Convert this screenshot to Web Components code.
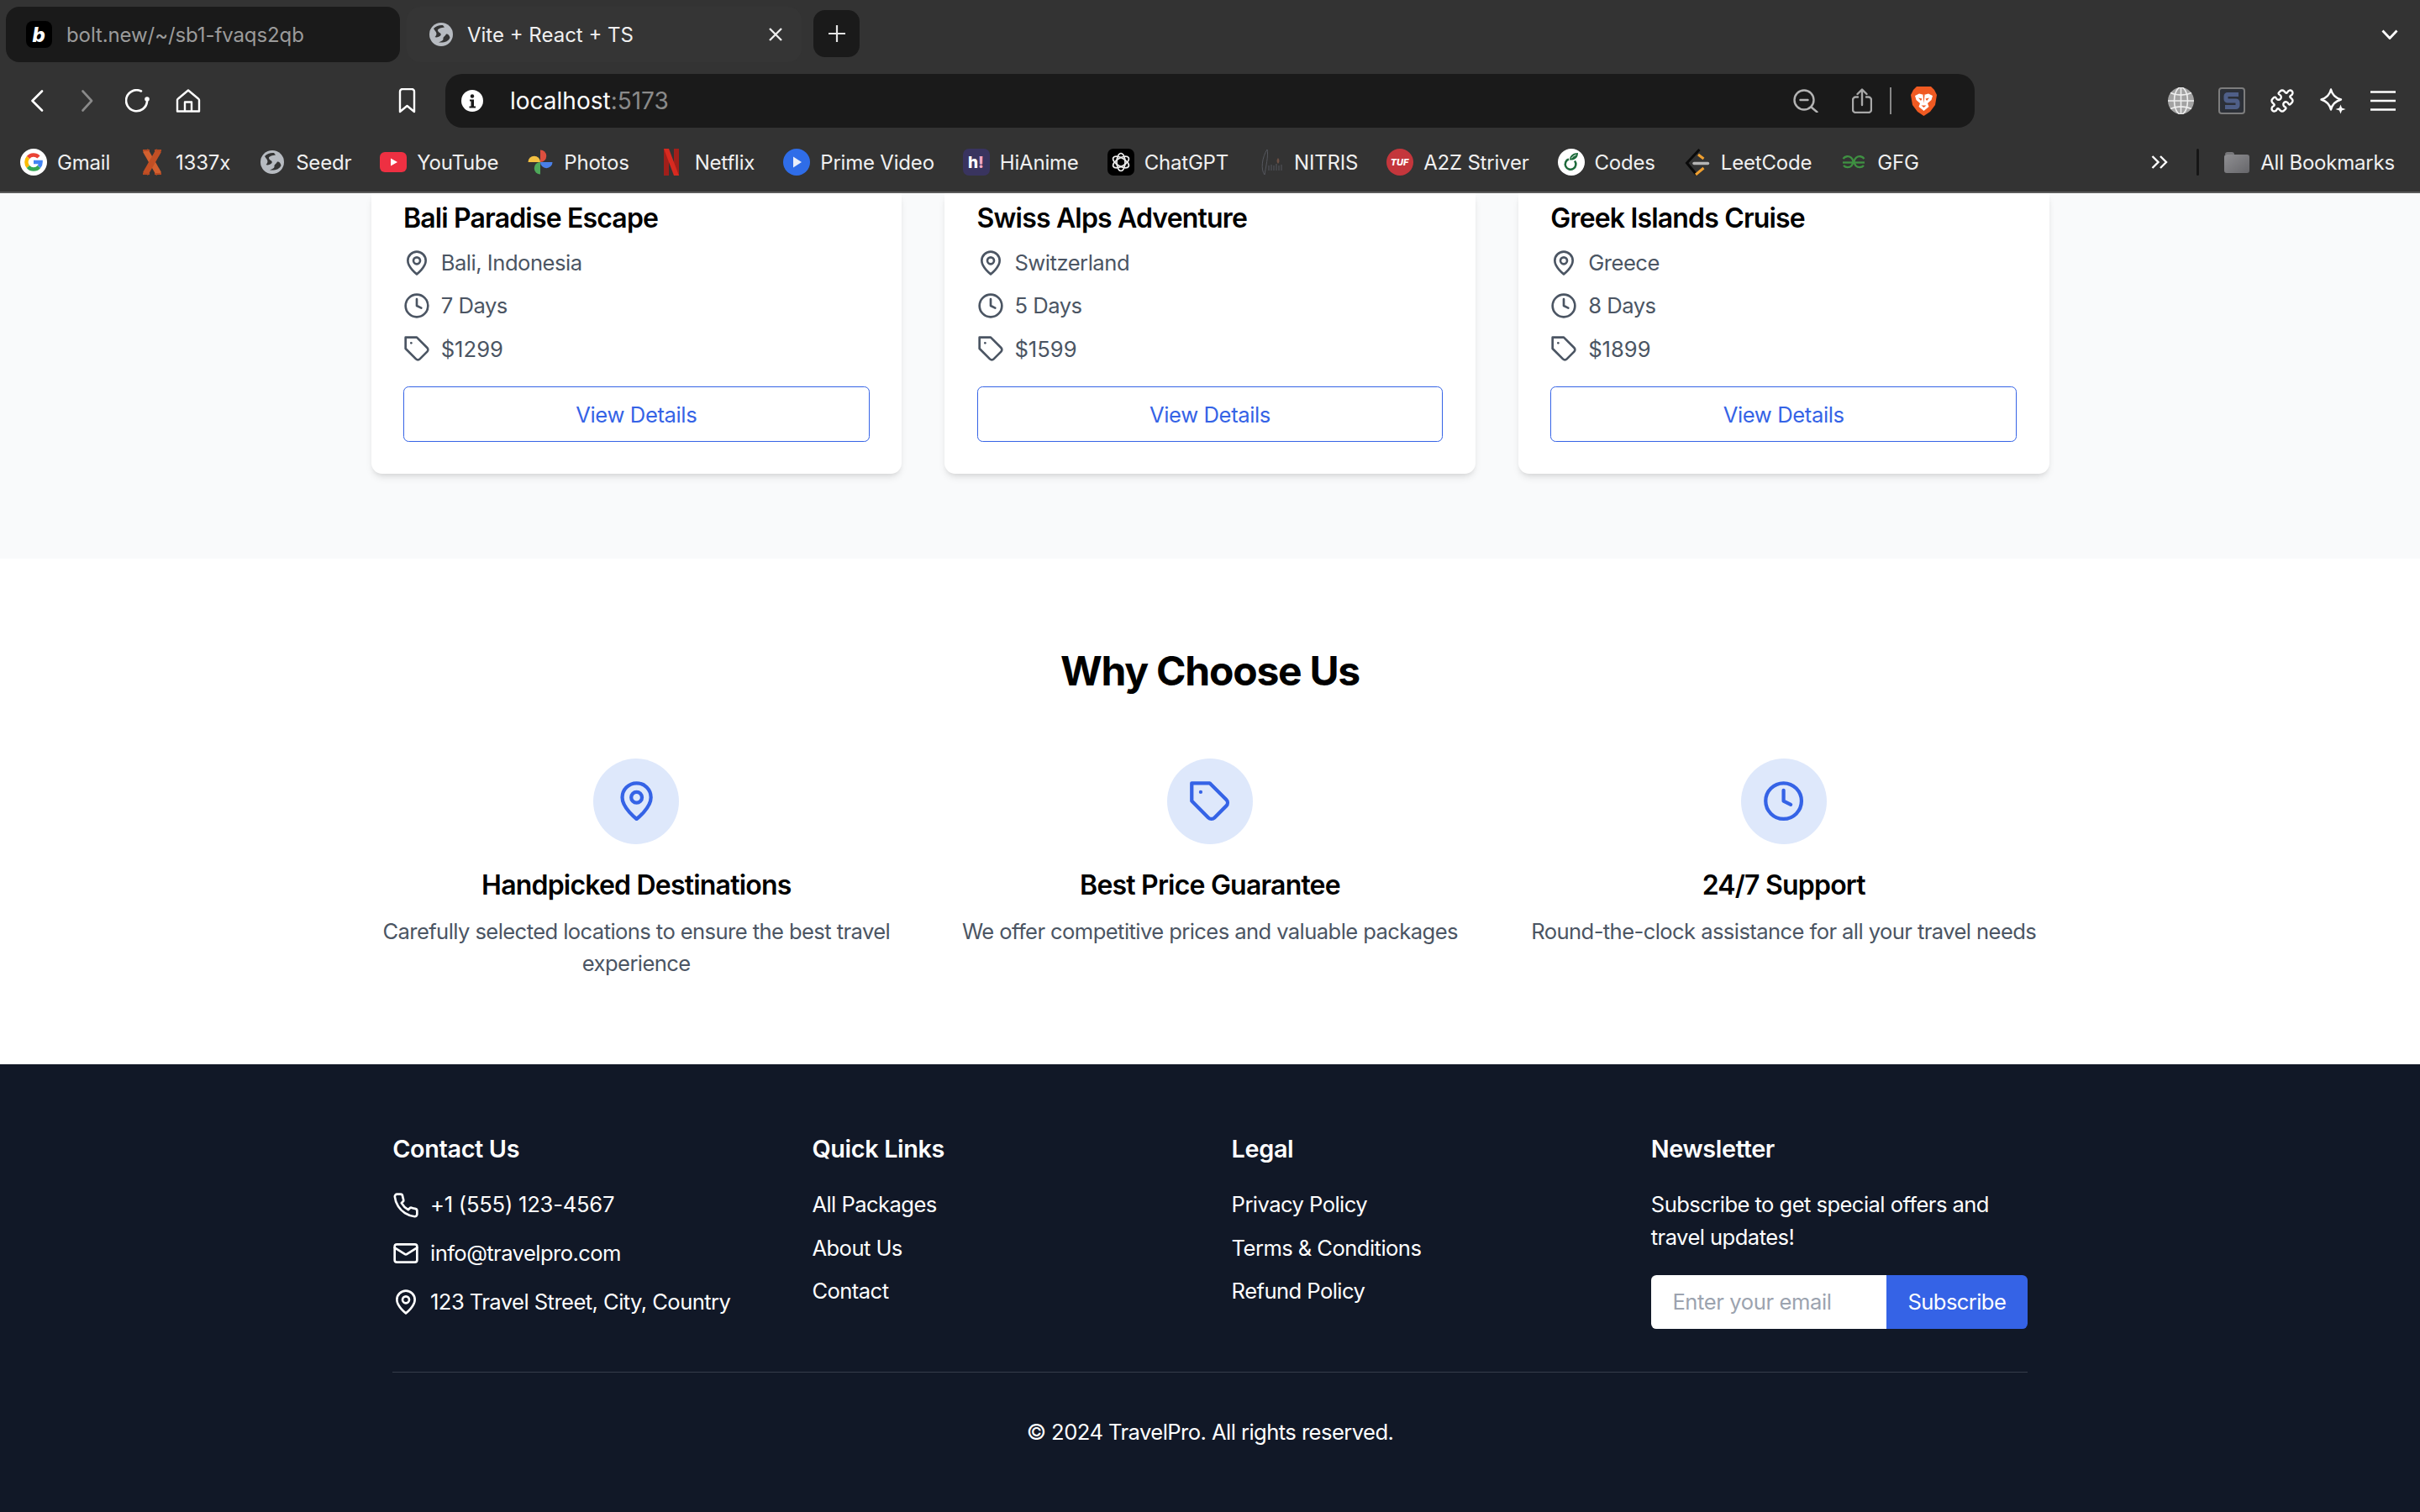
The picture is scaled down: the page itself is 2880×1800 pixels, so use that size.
<!doctype html>
<html lang="en">
  <head>
    <meta charset="UTF-8" />
    <title>Vite + React + TS</title>
    <style>
      html, body { margin: 0; height: 100%; }
      body { width: 2880px; height: 1800px; overflow: hidden; display: flex; flex-direction: column; font-family: Inter, "Liberation Sans", sans-serif; background: #111827; }
    </style>
  </head>
  <body>
    <browser-chrome></browser-chrome>

    <packages-section>
      <tour-card name="Bali Paradise Escape" place="Bali, Indonesia" days="7 Days" price="$1299"></tour-card>
      <tour-card name="Swiss Alps Adventure" place="Switzerland" days="5 Days" price="$1599"></tour-card>
      <tour-card name="Greek Islands Cruise" place="Greece" days="8 Days" price="$1899"></tour-card>
    </packages-section>

    <why-section>
      <why-item icon="pin" heading="Handpicked Destinations">Carefully selected locations to ensure the best travel experience</why-item>
      <why-item icon="tag" heading="Best Price Guarantee">We offer competitive prices and valuable packages</why-item>
      <why-item icon="clock" heading="24/7 Support">Round-the-clock assistance for all your travel needs</why-item>
    </why-section>

    <site-footer></site-footer>

    <script>
      // Lucide style icons used by the page itself
      const LUCIDE = {
        pin: '<path d="M20 10c0 6-8 12-8 12s-8-6-8-12a8 8 0 0 1 16 0Z"/><circle cx="12" cy="10" r="3"/>',
        clock: '<circle cx="12" cy="12" r="10"/><polyline points="12 6 12 12 16 14"/>',
        tag: '<path d="M12 2H2v10l9.29 9.29c.94.94 2.48.94 3.42 0l6.58-6.58c.94-.94.94-2.48 0-3.42L12 2Z"/><path d="M7 7h.01"/>',
        phone: '<path d="M22 16.92v3a2 2 0 0 1-2.18 2 19.79 19.79 0 0 1-8.63-3.07 19.5 19.5 0 0 1-6-6 19.79 19.79 0 0 1-3.07-8.67A2 2 0 0 1 4.11 2h3a2 2 0 0 1 2 1.72 12.84 12.84 0 0 0 .7 2.81 2 2 0 0 1-.45 2.11L8.09 9.91a16 16 0 0 0 6 6l1.27-1.27a2 2 0 0 1 2.11-.45 12.84 12.84 0 0 0 2.81.7A2 2 0 0 1 22 16.92z"/>',
        mail: '<rect width="20" height="16" x="2" y="4" rx="2"/><path d="m22 7-8.97 5.7a1.94 1.94 0 0 1-2.06 0L2 7"/>'
      }

      class LineIcon extends HTMLElement {
        connectedCallback() {
          const shadow = this.attachShadow({ mode: 'open' })
          const size = this.getAttribute('size') || 32
          shadow.innerHTML = `
            <style>:host { display: block; flex: none; width: ${size}px; height: ${size}px; } svg { display: block; }</style>
            <svg width="${size}" height="${size}" viewBox="0 0 24 24" fill="none" stroke="currentColor" stroke-width="2" stroke-linecap="round" stroke-linejoin="round">${LUCIDE[this.getAttribute('name')]}</svg>`
        }
      }
      customElements.define('line-icon', LineIcon)

      // Browser toolbar and bookmark glyphs: [width, height, viewBox, markup]
      const W = 'stroke="#fff" fill="none" stroke-linecap="round" stroke-linejoin="round"'
      const CHROME = {
        back: [16, 26, '0 0 16 26', `<path d="M14 1.5 2.5 13 14 24.5" ${W} stroke-width="2.6"/>`],
        forward: [14, 26, '0 0 14 26', `<path d="M1.5 1.5 12 13 1.5 24.5" ${W} stroke-width="2.6" style="stroke:#8a8a8a"/>`],
        reload: [30, 28, '0 0 30 28', `<path d="M26 15A12.5 12.5 0 1 1 19 2.5" ${W} stroke-width="2.6"/><circle cx="26" cy="12" r="2.8" fill="#fff"/>`],
        home: [30, 28, '0 0 30 28', `<path d="M15 1.5 3 11.5a2 2 0 0 0-1 2V26.5H28V13.5a2 2 0 0 0-1-2Z" ${W} stroke-width="2.4"/><path d="M11 26V15.5H19V26" ${W} stroke-width="2.4"/>`],
        bookmark: [21, 30, '0 0 21 30', `<path d="M2 4a3 3 0 0 1 3-3H16a3 3 0 0 1 3 3V28L10.5 21 2 28Z" ${W} stroke-width="2.4"/>`],
        info: [26, 26, '0 0 26 26', '<circle cx="13" cy="13" r="13" fill="#fff"/><circle cx="13" cy="7.5" r="2.2" fill="#1a1a1a"/><path d="M10 11.5h5v8h2v2H9.5v-2h2v-6H10Z" fill="#1a1a1a"/>'],
        zoomout: [30, 28, '0 0 30 28', '<g stroke="#b4b4b4" fill="none" stroke-width="2.4" stroke-linecap="round"><circle cx="13" cy="13" r="11.5"/><path d="M8.5 13h9M21.5 21.5 28.5 27.5"/></g>'],
        share: [24, 30, '0 0 24 30', '<g stroke="#a8a8a8" fill="none" stroke-width="2.4" stroke-linecap="round" stroke-linejoin="round"><path d="M7 10.5H4.5a3.5 3.5 0 0 0-3.5 3.5V25.5a3.5 3.5 0 0 0 3.5 3.5H19.5a3.5 3.5 0 0 0 3.5-3.5V14a3.5 3.5 0 0 0-3.5-3.5H17"/><path d="M12 20V2M6.5 7 12 1.5 17.5 7"/></g>'],
        brave: [31, 36, '0 0 31 36', '<path d="M7 1H24L28 5 31 11 29 23 23 31 15.5 36 8 31 2 23 0 11 3 5Z" fill="#f05a22"/><path d="M5 12 10 9.5 15.5 11 21 9.5 26 12 24.5 17 20 21 21.5 25 15.5 30 9.5 25 11 21 6.5 17Z" fill="#fff"/><path d="M9 14.5 13.5 15.5 12 18ZM22 14.5 17.5 15.5 19 18ZM14.5 11 15.5 21 16.5 11Z" fill="#f05a22"/><path d="M12.5 23.5h6l-3 2.5Z" fill="#f05a22"/>'],
        globe: [31, 32, '0 0 31 32', '<ellipse cx="15.5" cy="16" rx="15.5" ry="16" fill="#a3a3a3"/><g stroke="#eee" stroke-width="1.6" fill="none"><ellipse cx="15.5" cy="16" rx="8" ry="16"/><path d="M15.5 0V32M0 16H31M3 6.5C10 10 21 10 28 6.5M3 25.5C10 22 21 22 28 25.5"/></g>'],
        sbox: [32, 32, '0 0 32 32', '<rect x="1" y="1" width="30" height="30" rx="3" fill="#2c3038" stroke="#7d7d7d" stroke-width="2"/><path d="M24 8.5H11a2 2 0 0 0-2 2v3.5a2 2 0 0 0 2 2H21a2 2 0 0 1 2 2V21.5a2 2 0 0 1-2 2H8" fill="none" stroke="#4f5f88" stroke-width="5"/>'],
        puzzle: [30, 30, '0 0 24 24', `<path d="M19.439 7.85c-.049.322.059.648.289.878l1.568 1.568c.47.47.706 1.087.706 1.704s-.235 1.233-.706 1.704l-1.611 1.611a.98.98 0 0 1-.837.276c-.47-.07-.802-.48-.968-.925a2.501 2.501 0 1 0-3.214 3.214c.446.166.855.497.925.968a.979.979 0 0 1-.276.837l-1.61 1.61a2.404 2.404 0 0 1-1.705.707 2.402 2.402 0 0 1-1.704-.706l-1.568-1.568a1.026 1.026 0 0 0-.877-.29c-.493.074-.84.504-1.02.968a2.5 2.5 0 1 1-3.237-3.237c.464-.18.894-.527.967-1.02a1.026 1.026 0 0 0-.289-.877l-1.568-1.568A2.402 2.402 0 0 1 1.998 12c0-.617.236-1.234.706-1.704L4.23 8.77c.24-.24.581-.353.917-.303.515.077.877.528 1.073 1.01a2.5 2.5 0 1 0 3.259-3.259c-.482-.196-.933-.558-1.01-1.073-.05-.336.062-.676.303-.917l1.525-1.525A2.402 2.402 0 0 1 12 1.998c.617 0 1.234.236 1.704.706l1.568 1.568c.23.23.556.338.877.29.493-.074.84-.504 1.02-.968a2.5 2.5 0 1 1 3.237 3.237c-.464.18-.894.527-.967 1.02Z" ${W} stroke-width="1.9"/>`],
        sparkle: [31, 31, '0 0 31 31', `<path d="M13 1.5C14.5 8 18 11.5 25 13.5 18 15.5 14.5 19 13 25.5 11.5 19 8 15.5 1.5 13.5 8 11.5 11.5 8 13 1.5Z" ${W} stroke-width="2.4"/><path d="M24.5 19.5 26 23.5 30.5 25 26 26.5 24.5 30.5 23 26.5 18.5 25 23 23.5Z" fill="#fff"/>`],
        menu: [30, 24, '0 0 30 24', '<path d="M0 1.5H30M0 12H30M0 22.5H30" stroke="#fff" stroke-width="2.6"/>'],
        plus: [20, 20, '0 0 20 20', '<path d="M10 0V20M0 10H20" stroke="#e4e4e4" stroke-width="2.2"/>'],
        close: [18, 16, '0 0 18 16', '<path d="M2 1 16 15M16 1 2 15" stroke="#eee" stroke-width="2.4"/>'],
        chevdown: [20, 12, '0 0 20 12', '<path d="M1.5 1.5 10 10.5 18.5 1.5" stroke="#fff" fill="none" stroke-width="2.8"/>'],
        chevrons: [20, 16, '0 0 20 16', '<path d="M1.5 1 8.5 8 1.5 15M11 1 18 8 11 15" stroke="#fff" fill="none" stroke-width="2.4"/>'],
        favb: [31, 32, '0 0 31 32', '<rect width="31" height="32" rx="8" fill="#000"/><text x="15" y="25" text-anchor="middle" font-family="Inter" font-size="24" font-weight="800" font-style="italic" fill="#fff">b</text>'],
        world: [32, 32, '0 0 32 32', '<circle cx="16" cy="16" r="14" fill="#b7bbc1"/><path d="M7 9C10 6 14 4.5 18 5L20 7.5C16 8 12 9 12 11 12 14 17 14 15.5 17 14 19 10 20 8.5 19 11 17 11 14 9 12Z" fill="#333"/><path d="M22 15.5C24 15 26 17 26.5 20 24.5 24 21 26 13 25.5 16 24 19 23 18.5 21 18 19 21 18 22 15.5Z" fill="#333"/>'],
        google: [32, 32, '0 0 32 32', '<circle cx="16" cy="16" r="16" fill="#fff"/><g fill="none" stroke-width="4.6"><path d="M9.5 10.5A8.5 8.5 0 0 1 22 10" stroke="#ea4335"/><path d="M9.5 10.5A8.5 8.5 0 0 0 9.5 21.5" stroke="#fbbc05"/><path d="M9.5 21.5A8.5 8.5 0 0 0 22.5 21.5" stroke="#34a853"/><path d="M22.5 21.5A8.5 8.5 0 0 0 24.5 16H16" stroke="#4285f4"/></g>'],
        x1337: [32, 32, '0 0 32 32', '<g stroke-width="7"><path d="M8 2 24 30" stroke="#d2602f"/><path d="M24 2 8 30" stroke="#c24f24"/></g><path d="M5 2H13M19 2H27M5 30H13M19 30H27" stroke="#b84a22" stroke-width="2"/>'],
        youtube: [32, 32, '0 0 32 32', '<rect y="4" width="32" height="24" rx="6" fill="#ee3042"/><path d="M13 11.5 21 16 13 20.5Z" fill="#fff"/>'],
        photos: [32, 32, '0 0 32 32', '<path d="M16 16V1.5A7.25 7.25 0 0 1 16 16Z" fill="#dd4f3f"/><path d="M16 16H30.5A7.25 7.25 0 0 1 16 16Z" fill="#4a80e8"/><path d="M16 16V30.5A7.25 7.25 0 0 1 16 16Z" fill="#4ea85a"/><path d="M16 16H1.5A7.25 7.25 0 0 1 16 16Z" fill="#f3c042"/>'],
        netflix: [32, 32, '0 0 32 32', '<path d="M7 0H13V32H7ZM19 0H25V32H19Z" fill="#a11f1a"/><path d="M7 0H13L25 32H19Z" fill="#d72a20"/>'],
        prime: [32, 32, '0 0 32 32', '<circle cx="16" cy="16" r="16" fill="#2f6de8"/><path d="M12 9.5 22 16 12 22.5Z" fill="#e9eefa"/>'],
        hianime: [32, 32, '0 0 32 32', '<rect width="32" height="32" rx="7" fill="#39345f"/><text x="6" y="23" font-family="Inter" font-size="19" font-weight="800" fill="#fff">h</text><text x="18" y="23" font-family="Inter" font-size="19" font-weight="800" fill="#f4a8c6">!</text>'],
        chatgpt: [32, 32, '0 0 32 32', '<rect width="32" height="32" rx="7" fill="#000"/><g fill="none" stroke="#eee" stroke-width="1.7"><ellipse cx="16" cy="16" rx="5" ry="10.5"/><ellipse cx="16" cy="16" rx="5" ry="10.5" transform="rotate(60 16 16)"/><ellipse cx="16" cy="16" rx="5" ry="10.5" transform="rotate(120 16 16)"/></g>'],
        nitris: [32, 32, '0 0 32 32', '<g fill="none" stroke="#55575e" stroke-width="1"><path d="M9 31C4 25 6 10 12 1 14 7 10 24 9 31Z"/><path d="M14 26V20M17 26V19M20 26V20M23 26V18M26 26V20M29 26V19"/></g><path d="M25 11c2 2 2 5 0 7-2-2-2-5 0-7Z" fill="#6d5044"/>'],
        tuf: [32, 32, '0 0 32 32', '<circle cx="16" cy="16" r="16" fill="#c4363c"/><text x="15.5" y="20" text-anchor="middle" font-family="Inter" font-size="11" font-weight="800" font-style="italic" fill="#fff">TUF</text>'],
        codes: [32, 32, '0 0 32 32', '<circle cx="16" cy="16" r="16" fill="#fff"/><path d="M13 12.5a6.3 6.3 0 1 0 7 2" fill="none" stroke="#1e6b3c" stroke-width="2.5"/><path d="M14 13.5C14 8 18 5 24 5 24 11 20 14 14 13.5Z" fill="#1e6b3c"/><path d="M16 11.5C17.5 9.5 19.5 8 21.5 7.5" stroke="#fff" stroke-width="1" fill="none"/>'],
        leetcode: [32, 32, '0 0 32 32', '<path d="M18.5 1 3.5 17 15 31" fill="none" stroke="#0a0a0a" stroke-width="3"/><path d="M17 7 23.5 12M23.5 23 14 31" fill="none" stroke="#f0a030" stroke-width="3"/><path d="M12 17.5H28.5" stroke="#b5b5b5" stroke-width="3.5" stroke-linecap="round"/>'],
        gfg: [32, 32, '0 0 32 32', '<g fill="none" stroke="#3f9142" stroke-width="2.3"><path d="M3.5 12a6.5 6.5 0 1 1 .5 8"/><path d="M3 16.5H14.5"/><path d="M28.5 12a6.5 6.5 0 1 0-.5 8"/><path d="M29 16.5H17.5"/></g>'],
        folder: [30, 26, '0 0 30 26', '<defs><linearGradient id="f" x2="1" y2="1"><stop offset="0" stop-color="#8f8f92"/><stop offset="1" stop-color="#66666a"/></linearGradient></defs><path d="M1 4a3 3 0 0 1 3-3H9a3 3 0 0 1 3 3Z" fill="#77777a"/><rect y="4" width="30" height="22" rx="3" fill="url(#f)"/>']
      }

      class ChromeIcon extends HTMLElement {
        connectedCallback() {
          const shadow = this.attachShadow({ mode: 'open' })
          const [w, h, box, body] = CHROME[this.getAttribute('name')]
          shadow.innerHTML = `
            <style>:host { display: block; flex: none; width: ${w}px; height: ${h}px; } svg { display: block; }</style>
            <svg width="${w}" height="${h}" viewBox="${box}">${body}</svg>`
        }
      }
      customElements.define('chrome-icon', ChromeIcon)

      class BookmarkItem extends HTMLElement {
        constructor() {
          super()
          const shadow = this.attachShadow({ mode: 'open' })
          shadow.innerHTML = `
            <style>
              :host { display: flex; align-items: center; gap: 12px; color: #f0f0f0; font-size: 24px; letter-spacing: -.2px; white-space: nowrap; }
              .box { width: 32px; display: flex; justify-content: center; }
            </style>
            <div class="box"><chrome-icon name="${this.getAttribute('icon')}"></chrome-icon></div>
            <slot></slot>`
        }
      }
      customElements.define('bookmark-item', BookmarkItem)

      class BrowserChrome extends HTMLElement {
        constructor() {
          super()
          const shadow = this.attachShadow({ mode: 'open' })
          shadow.innerHTML = `
            <style>
              :host { display: block; flex: none; background: #333; border-bottom: 2px solid #5a5a5a; font-family: Inter, "Liberation Sans", sans-serif; }
              .tabs { height: 88px; box-sizing: border-box; padding: 8px 26px 0 7px; display: flex; align-items: flex-start; }
              .tab { height: 66px; border-radius: 16px; display: flex; align-items: center; font-size: 24px; box-sizing: border-box; }
              .tab.off { width: 469px; background: #1a1a1a; color: #9b9b9b; padding-left: 24px; gap: 17px; letter-spacing: -.1px; }
              .tab.on { width: 470px; margin-left: 8px; background: #353535; color: #f0f0f0; padding: 0 22px 0 25px; gap: 15px; }
              .tab.on chrome-icon[name=close] { margin-left: auto; }
              .new { width: 55px; height: 56px; margin: 4px 0 0 14px; border-radius: 14px; background: #1a1a1a; display: flex; align-items: center; justify-content: center; }
              .tabs > chrome-icon { margin: 27px 0 0 auto; }
              .bar { height: 64px; display: flex; align-items: center; }
              .url { width: 1820px; height: 64px; margin-left: 35px; box-sizing: border-box; padding: 0 45px 0 19px; background: #1a1a1a; border-radius: 20px; display: flex; align-items: center; font-size: 28px; color: #fff; }
              .url span { margin-left: 32px; }
              .url i { font-style: normal; color: #8a8a8a; }
              .url .sep { width: 2px; height: 32px; background: #888; margin: 0 23px 0 21px; }
              .marks { height: 76px; box-sizing: border-box; padding: 6px 30px 0 24px; display: flex; align-items: center; justify-content: space-between; }
              .marks div { display: flex; align-items: center; gap: 34px; }
              .marks .rule { width: 3px; height: 32px; background: #151515; border-radius: 2px; margin-right: -5px; }
            </style>
            <div class="tabs">
              <div class="tab off"><chrome-icon name="favb"></chrome-icon>bolt.new/~/sb1-fvaqs2qb</div>
              <div class="tab on"><chrome-icon name="world"></chrome-icon>Vite + React + TS<chrome-icon name="close"></chrome-icon></div>
              <div class="new"><chrome-icon name="plus"></chrome-icon></div>
              <chrome-icon name="chevdown"></chrome-icon>
            </div>
            <div class="bar">
              <chrome-icon name="back" style="margin-left:36px"></chrome-icon>
              <chrome-icon name="forward" style="margin-left:45px"></chrome-icon>
              <chrome-icon name="reload" style="margin-left:38px"></chrome-icon>
              <chrome-icon name="home" style="margin-left:30px"></chrome-icon>
              <chrome-icon name="bookmark" style="margin-left:235px"></chrome-icon>
              <div class="url">
                <chrome-icon name="info"></chrome-icon>
                <span>localhost<i>:5173</i></span>
                <chrome-icon name="zoomout" style="margin-left:auto"></chrome-icon>
                <chrome-icon name="share" style="margin-left:40px"></chrome-icon>
                <div class="sep"></div>
                <chrome-icon name="brave"></chrome-icon>
              </div>
              <chrome-icon name="globe" style="margin-left:230px"></chrome-icon>
              <chrome-icon name="sbox" style="margin-left:29px"></chrome-icon>
              <chrome-icon name="puzzle" style="margin-left:29px"></chrome-icon>
              <chrome-icon name="sparkle" style="margin-left:30px"></chrome-icon>
              <chrome-icon name="menu" style="margin-left:29px"></chrome-icon>
            </div>
            <div class="marks">
              <div>
                <bookmark-item icon="google">Gmail</bookmark-item>
                <bookmark-item icon="x1337">1337x</bookmark-item>
                <bookmark-item icon="world">Seedr</bookmark-item>
                <bookmark-item icon="youtube">YouTube</bookmark-item>
                <bookmark-item icon="photos">Photos</bookmark-item>
                <bookmark-item icon="netflix">Netflix</bookmark-item>
                <bookmark-item icon="prime">Prime Video</bookmark-item>
                <bookmark-item icon="hianime">HiAnime</bookmark-item>
                <bookmark-item icon="chatgpt">ChatGPT</bookmark-item>
                <bookmark-item icon="nitris">NITRIS</bookmark-item>
                <bookmark-item icon="tuf">A2Z Striver</bookmark-item>
                <bookmark-item icon="codes">Codes</bookmark-item>
                <bookmark-item icon="leetcode">LeetCode</bookmark-item>
                <bookmark-item icon="gfg">GFG</bookmark-item>
              </div>
              <div>
                <chrome-icon name="chevrons"></chrome-icon>
                <span class="rule"></span>
                <bookmark-item icon="folder">All Bookmarks</bookmark-item>
              </div>
            </div>`
        }
      }
      customElements.define('browser-chrome', BrowserChrome)

      class PackagesSection extends HTMLElement {
        constructor() {
          super()
          const shadow = this.attachShadow({ mode: 'open' })
          shadow.innerHTML = `
            <style>
              :host { display: block; flex: none; background: #f9fafb; padding-bottom: 101px; }
              .grid { width: 1997px; margin: 0 auto; display: grid; grid-template-columns: repeat(3, 1fr); gap: 51.2px; }
            </style>
            <div class="grid"><slot></slot></div>`
        }
      }
      customElements.define('packages-section', PackagesSection)

      class TourCard extends HTMLElement {
        constructor() {
          super()
          const shadow = this.attachShadow({ mode: 'open' })
          shadow.innerHTML = `
            <style>
              :host { display: block; background: #fff; border-radius: 0 0 12.8px 12.8px; box-shadow: 0 6px 10px -2px rgba(0,0,0,.1), 0 3px 6px -3px rgba(0,0,0,.1); padding: 7.5px 38.4px 38.4px; }
              h3 { margin: 0 0 11.3px; font-size: 32px; line-height: 44.8px; font-weight: 600; color: #000; letter-spacing: -.026em; }
              .row { display: flex; align-items: center; gap: 12.8px; height: 38.4px; margin-bottom: 12.8px; font-size: 25.6px; color: #4b5563; letter-spacing: -.019em; }
              .row.num { margin-bottom: 0; letter-spacing: 0; }
              .btn { margin-top: 25.6px; height: 65.6px; padding-top: 2px; border: 1.6px solid #3563e6; border-radius: 6.4px; box-sizing: border-box; display: flex; align-items: center; justify-content: center; font-size: 25.6px; color: #3563e6; letter-spacing: -.015em; }
            </style>
            <h3>${this.getAttribute('name')}</h3>
            <div class="row"><line-icon name="pin"></line-icon>${this.getAttribute('place')}</div>
            <div class="row"><line-icon name="clock"></line-icon>${this.getAttribute('days')}</div>
            <div class="row num"><line-icon name="tag"></line-icon>${this.getAttribute('price')}</div>
            <div class="btn">View Details</div>`
        }
      }
      customElements.define('tour-card', TourCard)

      class WhySection extends HTMLElement {
        constructor() {
          super()
          const shadow = this.attachShadow({ mode: 'open' })
          shadow.innerHTML = `
            <style>
              :host { display: block; flex: none; background: #fff; padding: 103.4px 0 99.9px; }
              h2 { margin: 0 0 75.3px; padding-top: 1.5px; text-align: center; font-size: 48px; line-height: 57.6px; font-weight: 700; color: #000; letter-spacing: -.026em; }
              .grid { width: 1997px; margin: 0 auto; display: grid; grid-template-columns: repeat(3, 1fr); gap: 51.2px; }
            </style>
            <h2>Why Choose Us</h2>
            <div class="grid"><slot></slot></div>`
        }
      }
      customElements.define('why-section', WhySection)

      class WhyItem extends HTMLElement {
        constructor() {
          super()
          const shadow = this.attachShadow({ mode: 'open' })
          shadow.innerHTML = `
            <style>
              :host { display: block; text-align: center; }
              .dot { width: 102.4px; height: 102.4px; margin: 0 auto 25.6px; border-radius: 50%; background: #dee8fb; color: #3563e6; display: flex; align-items: center; justify-content: center; }
              h3 { margin: 0 0 12.8px; padding-top: 1.5px; font-size: 32px; line-height: 44.8px; font-weight: 600; color: #000; letter-spacing: -.025em; }
              p { margin: 0; font-size: 25.6px; line-height: 38.4px; color: #4b5563; letter-spacing: -.023em; }
            </style>
            <div class="dot"><line-icon name="${this.getAttribute('icon')}" size="51.2"></line-icon></div>
            <h3>${this.getAttribute('heading')}</h3>
            <p><slot></slot></p>`
        }
      }
      customElements.define('why-item', WhyItem)

      class SiteFooter extends HTMLElement {
        constructor() {
          super()
          const shadow = this.attachShadow({ mode: 'open' })
          shadow.innerHTML = `
            <style>
              :host { display: block; flex: 1; background: #111827; color: #fff; padding: 78.6px 0 0; font-size: 25.6px; line-height: 38.4px; letter-spacing: -.022em; }
              .wrap { width: 1945.6px; margin: 0 auto; }
              .grid { display: grid; grid-template-columns: repeat(4, minmax(0, 1fr)); gap: 51.2px; }
              h4 { margin: 0 0 24.6px; padding-top: 1px; font-size: 28.8px; line-height: 44.8px; font-weight: 600; letter-spacing: -.012em; }
              .contact { display: flex; flex-direction: column; gap: 19.2px; }
              .contact div { display: flex; align-items: center; gap: 12.8px; }
              .contact .tel { letter-spacing: -.009em; }
              .links { display: flex; flex-direction: column; gap: 12.8px; }
              p { margin: 0 0 25.6px; }
              form { display: flex; margin: 0; height: 64px; }
              input { flex: 1; min-width: 0; border: 0; outline: 0; padding: 0 25.6px; font: inherit; letter-spacing: -.016em; background: #fff; border-radius: 6.4px 0 0 6.4px; }
              input::placeholder { color: #9ca3af; opacity: 1; }
              button { border: 0; padding: 0 25.6px; font: inherit; letter-spacing: -.024em; color: #fff; background: #3563e6; border-radius: 0 6.4px 6.4px 0; }
              .copy { margin-top: 51.2px; border-top: 1px solid #363d4b; padding-top: 51.8px; text-align: center; }
            </style>
            <div class="wrap">
              <div class="grid">
                <div>
                  <h4>Contact Us</h4>
                  <div class="contact">
                    <div class="tel"><line-icon name="phone"></line-icon>+1 (555) 123-4567</div>
                    <div><line-icon name="mail"></line-icon>info@travelpro.com</div>
                    <div><line-icon name="pin"></line-icon>123 Travel Street, City, Country</div>
                  </div>
                </div>
                <div>
                  <h4>Quick Links</h4>
                  <div class="links"><span>All Packages</span><span>About Us</span><span>Contact</span></div>
                </div>
                <div>
                  <h4>Legal</h4>
                  <div class="links"><span>Privacy Policy</span><span>Terms &amp; Conditions</span><span>Refund Policy</span></div>
                </div>
                <div>
                  <h4>Newsletter</h4>
                  <p>Subscribe to get special offers and travel updates!</p>
                  <form onsubmit="return false"><input type="email" placeholder="Enter your email" /><button>Subscribe</button></form>
                </div>
              </div>
              <div class="copy">© 2024 TravelPro. All rights reserved.</div>
            </div>`
        }
      }
      customElements.define('site-footer', SiteFooter)
    </script>
  </body>
</html>
